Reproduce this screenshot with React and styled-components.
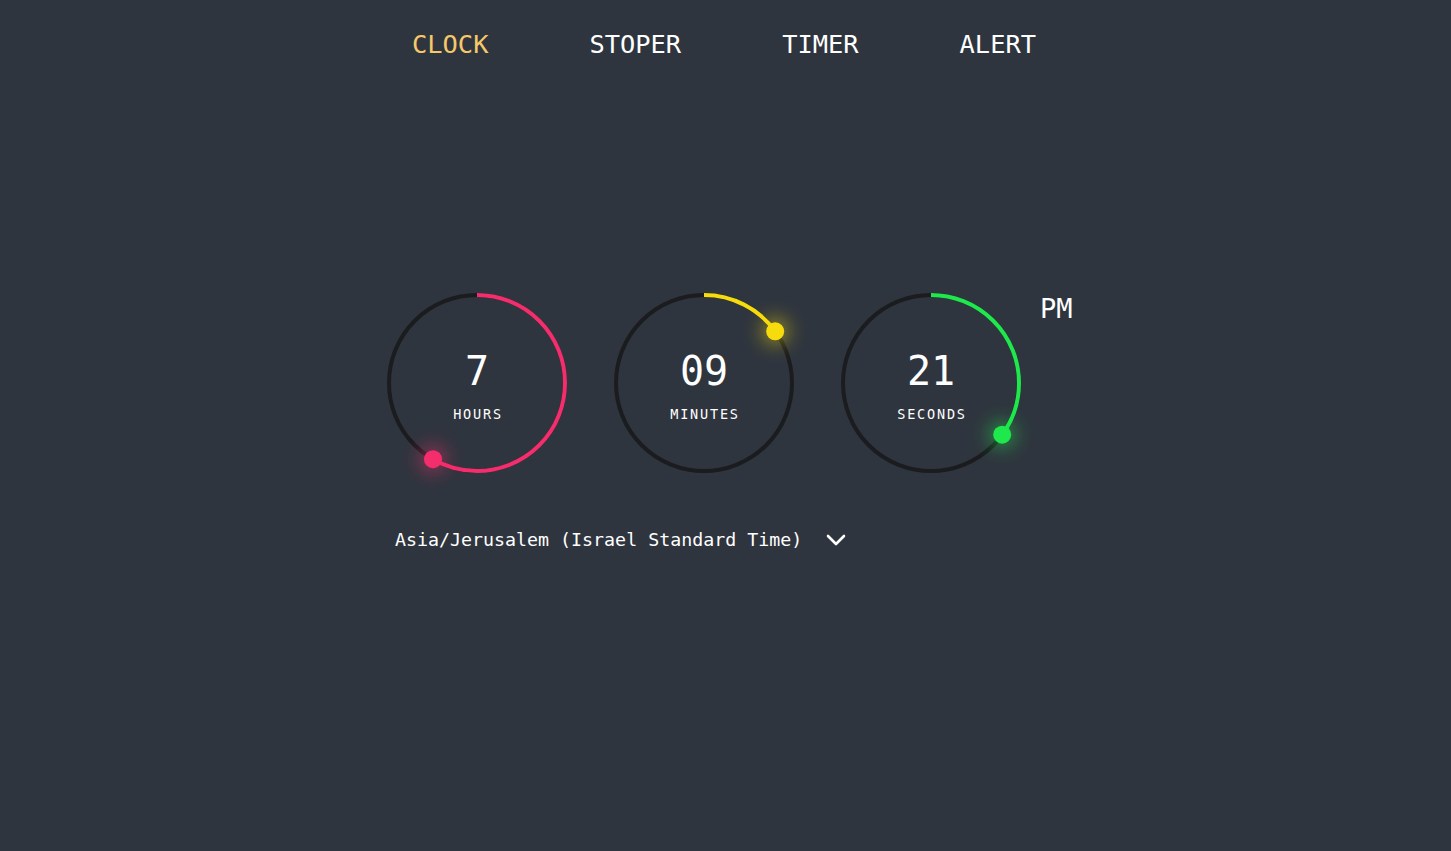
import React from "react";
import styled, { createGlobalStyle } from "styled-components";

const GlobalStyle = createGlobalStyle`
  html, body {
    margin: 0;
    padding: 0;
    background-color: #2f353e;
    font-family: "DejaVu Sans Mono", "Liberation Mono", monospace;
    color: #ffffff;
  }
`;

const Page = styled.div`
  min-height: 851px;
  display: flex;
  flex-direction: column;
  align-items: center;
`;

const Nav = styled.nav`
  display: flex;
  gap: 101px;
  padding-top: 29px;
  margin-left: -3px;
`;

const NavItem = styled.a`
  font-size: 25.4px;
  line-height: 30px;
  color: ${(p) => (p.active ? "#f6c86a" : "#ffffff")};
  cursor: pointer;
  text-decoration: none;
`;

const Panel = styled.div`
  width: 697px;
  padding-left: 8px;
  box-sizing: border-box;
  margin-top: 232px;
  display: flex;
  flex-direction: column;
`;

const Dials = styled.div`
  display: flex;
  align-items: flex-start;
  gap: 43px;
`;

const Dial = styled.div`
  position: relative;
  width: 184px;
  height: 184px;
`;

const DialSvg = styled.svg`
  display: block;
  overflow: visible;
`;

const DialText = styled.div`
  position: absolute;
  inset: 0;
  display: flex;
  flex-direction: column;
  align-items: center;
  justify-content: center;
  padding-top: 4px;
`;

const Value = styled.div`
  font-size: 40px;
  line-height: 44px;
`;

const Label = styled.div`
  margin-top: 14px;
  font-size: 13.5px;
  line-height: 15px;
  letter-spacing: 1.8px;
  padding-left: 2px;
`;

const Meridiem = styled.div`
  margin-left: -26px;
  margin-top: 3px;
  font-size: 27px;
  line-height: 30px;
`;

const Zone = styled.div`
  margin-top: 53px;
  margin-left: 10px;
  display: flex;
  align-items: center;
  gap: 24px;
  font-size: 18.3px;
  line-height: 24px;
  cursor: pointer;
`;

const R = 88;
const C = 2 * Math.PI * R;

function Ring({ value, max, color, label, text }) {
  const frac = value / max;
  const ang = frac * 2 * Math.PI;
  const cx = 92 + R * Math.sin(ang);
  const cy = 92 - R * Math.cos(ang);
  const id = "glow-" + label;
  return (
    <Dial>
      <DialSvg width="184" height="184" viewBox="0 0 184 184">
        <defs>
          <filter id={id} x="-300%" y="-300%" width="700%" height="700%">
            <feGaussianBlur stdDeviation="9" />
          </filter>
        </defs>
        <circle cx="92" cy="92" r={R} fill="none" stroke="#1b1c1f" strokeWidth="4" />
        <circle
          cx="92"
          cy="92"
          r={R}
          fill="none"
          stroke={color}
          strokeWidth="4"
          strokeDasharray={`${C * frac} ${C}`}
          transform="rotate(-90 92 92)"
        />
        <circle cx={cx} cy={cy} r="14" fill={color} opacity="0.45" filter={`url(#${id})`} />
        <circle cx={cx} cy={cy} r="9" fill={color} />
      </DialSvg>
      <DialText>
        <Value>{text}</Value>
        <Label>{label}</Label>
      </DialText>
    </Dial>
  );
}

export default function App() {
  return (
    <Page>
      <GlobalStyle />
      <Nav>
        <NavItem active>CLOCK</NavItem>
        <NavItem>STOPER</NavItem>
        <NavItem>TIMER</NavItem>
        <NavItem>ALERT</NavItem>
      </Nav>
      <Panel>
        <Dials>
          <Ring value={7} max={12} color="#f42d6d" label="HOURS" text="7" />
          <Ring value={9} max={60} color="#f6dc0c" label="MINUTES" text="09" />
          <Ring value={21} max={60} color="#1ee84b" label="SECONDS" text="21" />
          <Meridiem>PM</Meridiem>
        </Dials>
        <Zone>
          <span>Asia/Jerusalem (Israel Standard Time)</span>
          <svg width="20" height="12" viewBox="0 0 20 12">
            <path d="M2 2 L10 10 L18 2" fill="none" stroke="#ffffff" strokeWidth="2.6" strokeLinecap="round" strokeLinejoin="round" />
          </svg>
        </Zone>
      </Panel>
    </Page>
  );
}
